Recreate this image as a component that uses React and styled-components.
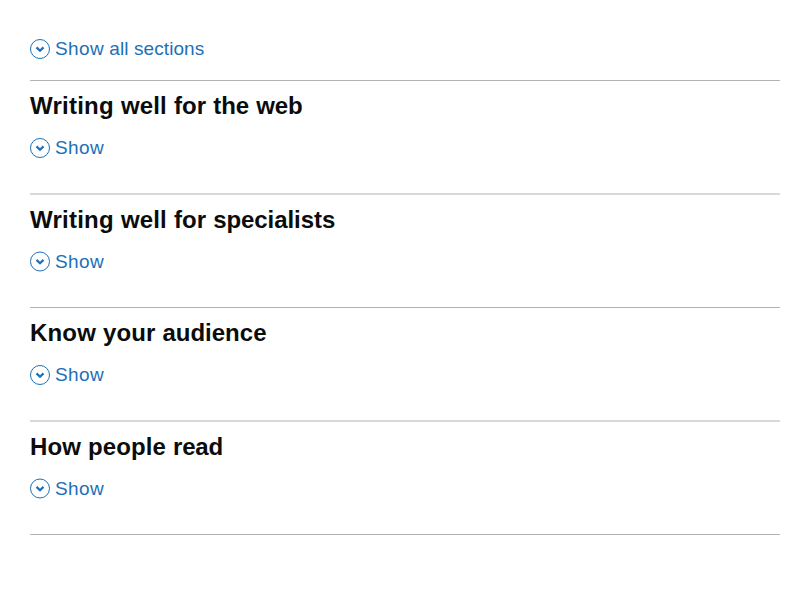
import React from "react";
import styled, { createGlobalStyle } from "styled-components";

const GlobalStyle = createGlobalStyle`
  body {
    margin: 0;
    background: #fff;
    font-family: "Liberation Sans", Arial, sans-serif;
    color: #0b0c0c;
  }
`;

const Accordion = styled.main`
  padding: 30px;
`;

const Controls = styled.div`
  display: flex;
  align-items: flex-start;
  height: 50px;
  padding-top: 6px;
  box-sizing: border-box;
`;

const Section = styled.section`
  box-sizing: border-box;
  height: ${({ $soft }) => ($soft ? 114 : 113)}px;
  padding-top: 10px;
  border-top: ${({ $soft }) => ($soft ? "2px solid #d8d9da" : "1px solid #b1b4b6")};
`;

const Heading = styled.h2`
  margin: 0 0 14px;
  font-size: 24px;
  line-height: 30px;
  font-weight: 700;
  word-spacing: 0.33px;
`;

const Toggle = styled.button`
  display: flex;
  align-items: center;
  gap: 5px;
  padding: 0;
  border: 0;
  background: none;
  color: #1d70b8;
  font: 400 19px/25px "Liberation Sans", Arial, sans-serif;
  cursor: pointer;
`;

const Icon = styled.svg`
  display: block;
  width: 20px;
  height: 21px;
  margin-top: 1px;
  overflow: visible;
`;

const Label = styled.span`
  white-space: pre;
  letter-spacing: 0.08px;
`;

const Word = styled.span`
  letter-spacing: ${({ $tracking }) => $tracking}px;
`;

const Rule = styled.div`
  border-top: 1px solid #b1b4b6;
`;

const sections = [
  { title: "Writing well for the web" },
  { title: "Writing well for specialists", soft: true },
  { title: "Know your audience" },
  { title: "How people read", soft: true },
];

const headingTracking = {
  Writing: 0.24,
  well: 0.16,
  for: 0.1,
  the: 0,
  web: -0.05,
  specialists: -0.07,
  Know: 0.17,
  your: 0.1,
  audience: 0,
  How: 0.11,
  people: 0.11,
  read: -0.17,
};

function HeadingText({ text }) {
  return text.split(" ").map((word, index) => (
    <React.Fragment key={word}>
      {index > 0 && " "}
      <Word $tracking={headingTracking[word]}>{word}</Word>
    </React.Fragment>
  ));
}

function ShowToggle({ suffix, soft }) {
  return (
    <Toggle type="button">
      <Icon viewBox="0 0 20 21" fill="none" stroke="currentColor" aria-hidden="true">
        <g transform={soft ? "translate(0 -0.5)" : undefined}>
          <circle cx="10" cy="10" r="9.5" />
          <path d="M6.5 8.4 10 11.8 13.5 8.4" strokeWidth="2.2" />
        </g>
      </Icon>
      <Label>
        <Word $tracking={0.37}>Show</Word>
        {suffix}
      </Label>
    </Toggle>
  );
}

export default function App() {
  return (
    <>
      <GlobalStyle />
      <Accordion>
        <Controls>
          <ShowToggle suffix=" all sections" />
        </Controls>
        {sections.map(({ title, soft }) => (
          <Section key={title} $soft={soft}>
            <Heading>
              <HeadingText text={title} />
            </Heading>
            <ShowToggle soft={soft} />
          </Section>
        ))}
        <Rule />
      </Accordion>
    </>
  );
}
